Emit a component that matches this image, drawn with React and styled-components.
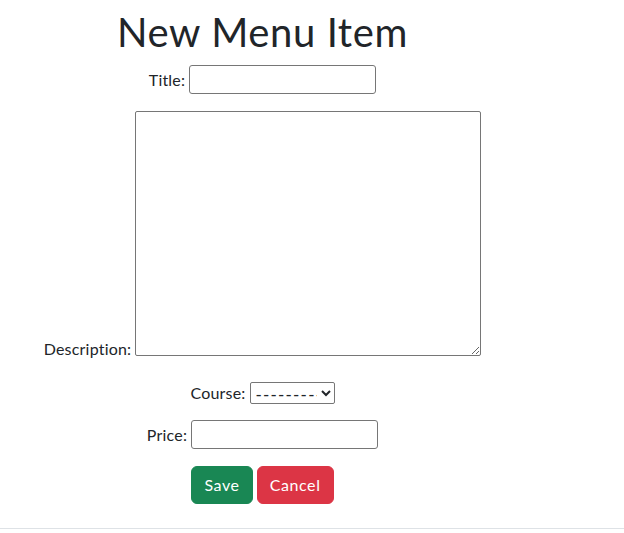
import React from "react";
import styled, { createGlobalStyle } from "styled-components";

const Global = createGlobalStyle`
  html, body { margin: 0; padding: 0; background: #fff; }
  body {
    font-family: "Lato", "Noto Sans", "Liberation Sans", sans-serif;
    font-size: 16px;
    line-height: 1.5;
    color: #212529;
  }
  *, *::before, *::after { box-sizing: border-box; }
`;

const Main = styled.main`
  width: 525px;
  display: flex;
  flex-direction: column;
  align-items: center;
`;

const Heading = styled.h1`
  margin: 0;
  padding-top: 8px;
  font-size: 40px;
  line-height: 48px;
  font-weight: 400;
  letter-spacing: 0.6px;
  color: #212529;
`;

const Form = styled.form`
  display: flex;
  flex-direction: column;
  align-items: center;
`;

const Row = styled.div`
  display: flex;
  align-items: ${(p) => p.$align || "baseline"};
  gap: 4px;
  margin-top: ${(p) => p.$mt}px;
`;

const Label = styled.label`
  font-size: 16px;
  line-height: 24px;
  letter-spacing: 0.2px;
  color: #212529;
  margin-bottom: ${(p) => (p.$drop ? "-5px" : "0")};
`;

const TextInput = styled.input`
  width: 187px;
  height: 29px;
  padding: 1px 2px;
  border: 1px solid #767676;
  border-radius: 3px;
  font: inherit;
  background: #fff;
`;

const TextArea = styled.textarea`
  width: 346px;
  height: 245px;
  padding: 2px;
  border: 1px solid #767676;
  border-radius: 2px;
  font: inherit;
  resize: both;
  display: block;
`;

const Select = styled.select`
  width: 85px;
  height: 22px;
  padding: 0 1px;
  border: 1px solid #767676;
  border-radius: 2px;
  background: #fff;
  font-family: inherit;
  font-size: 17px;
  letter-spacing: 1.2px;
  color: #212529;
`;

const Buttons = styled.div`
  display: flex;
  gap: 4px;
  margin-top: ${(p) => p.$mt}px;
`;

const Button = styled.button`
  height: 38px;
  padding: 6px 12px;
  border: 1px solid ${(p) => p.$bg};
  border-radius: 6px;
  background: ${(p) => p.$bg};
  color: #fff;
  font-family: inherit;
  font-size: 16px;
  line-height: 24px;
  letter-spacing: 0.6px;
  cursor: pointer;
`;

const Footer = styled.footer`
  margin-top: 24px;
  border-top: 1px solid #dee2e6;
  height: 4px;
`;

export default function App() {
  return (
    <>
      <Global />
      <Main>
        <Heading>New Menu Item</Heading>
        <Form onSubmit={(e) => e.preventDefault()}>
          <Row $mt={9}>
            <Label htmlFor="id_title">Title:</Label>
            <TextInput id="id_title" type="text" />
          </Row>
          <Row $mt={17} $align="flex-end">
            <Label htmlFor="id_description" $drop>Description:</Label>
            <TextArea id="id_description" />
          </Row>
          <Row $mt={25} $align="center">
            <Label htmlFor="id_course">Course:</Label>
            <Select id="id_course" defaultValue="">
              <option value="">---------</option>
            </Select>
          </Row>
          <Row $mt={15}>
            <Label htmlFor="id_price">Price:</Label>
            <TextInput id="id_price" type="text" />
          </Row>
          <Buttons $mt={17}>
            <Button type="submit" $bg="#198754">Save</Button>
            <Button type="button" $bg="#dc3545">Cancel</Button>
          </Buttons>
        </Form>
      </Main>
      <Footer />
    </>
  );
}
